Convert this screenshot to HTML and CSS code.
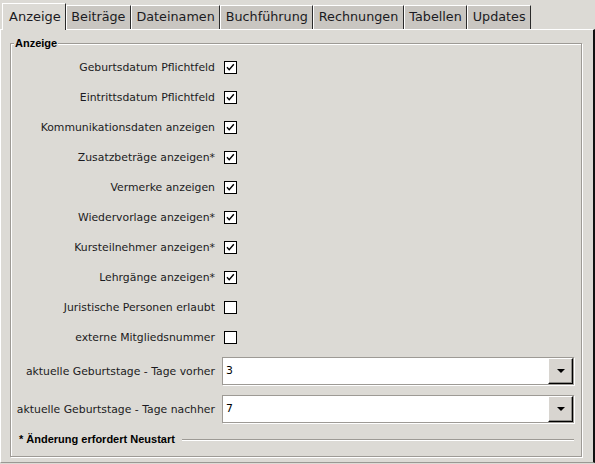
FILE: index.html
```html
<!DOCTYPE html>
<html lang="de">
<head>
<meta charset="utf-8">
<title>Einstellungen</title>
<link rel="stylesheet" href="styles.css">
</head>
<body>
<div class="tabs">
  <div class="tab active">Anzeige</div>
  <div class="tab">Beiträge</div>
  <div class="tab">Dateinamen</div>
  <div class="tab">Buchführung</div>
  <div class="tab">Rechnungen</div>
  <div class="tab">Tabellen</div>
  <div class="tab">Updates</div>
</div>
<div class="panel">
  <fieldset class="group">
    <legend class="group-title">Anzeige</legend>
    <div class="rows">
      <div class="row check"><span class="label">Geburtsdatum Pflichtfeld</span><svg class="cb" viewBox="0 0 13 13"><rect x="0.5" y="0.5" width="12" height="12"/><path d="M3 6.2 L5.2 8.6 L9.8 3.2"/></svg></div>
      <div class="row check"><span class="label">Eintrittsdatum Pflichtfeld</span><svg class="cb" viewBox="0 0 13 13"><rect x="0.5" y="0.5" width="12" height="12"/><path d="M3 6.2 L5.2 8.6 L9.8 3.2"/></svg></div>
      <div class="row check"><span class="label">Kommunikationsdaten anzeigen</span><svg class="cb" viewBox="0 0 13 13"><rect x="0.5" y="0.5" width="12" height="12"/><path d="M3 6.2 L5.2 8.6 L9.8 3.2"/></svg></div>
      <div class="row check"><span class="label">Zusatzbeträge anzeigen*</span><svg class="cb" viewBox="0 0 13 13"><rect x="0.5" y="0.5" width="12" height="12"/><path d="M3 6.2 L5.2 8.6 L9.8 3.2"/></svg></div>
      <div class="row check"><span class="label">Vermerke anzeigen</span><svg class="cb" viewBox="0 0 13 13"><rect x="0.5" y="0.5" width="12" height="12"/><path d="M3 6.2 L5.2 8.6 L9.8 3.2"/></svg></div>
      <div class="row check"><span class="label">Wiedervorlage anzeigen*</span><svg class="cb" viewBox="0 0 13 13"><rect x="0.5" y="0.5" width="12" height="12"/><path d="M3 6.2 L5.2 8.6 L9.8 3.2"/></svg></div>
      <div class="row check"><span class="label">Kursteilnehmer anzeigen*</span><svg class="cb" viewBox="0 0 13 13"><rect x="0.5" y="0.5" width="12" height="12"/><path d="M3 6.2 L5.2 8.6 L9.8 3.2"/></svg></div>
      <div class="row check"><span class="label">Lehrgänge anzeigen*</span><svg class="cb" viewBox="0 0 13 13"><rect x="0.5" y="0.5" width="12" height="12"/><path d="M3 6.2 L5.2 8.6 L9.8 3.2"/></svg></div>
      <div class="row check"><span class="label">Juristische Personen erlaubt</span><svg class="cb" viewBox="0 0 13 13"><rect x="0.5" y="0.5" width="12" height="12"/></svg></div>
      <div class="row check"><span class="label">externe Mitgliedsnummer</span><svg class="cb" viewBox="0 0 13 13"><rect x="0.5" y="0.5" width="12" height="12"/></svg></div>
      <div class="row combo-row first"><span class="label">aktuelle Geburtstage - Tage vorher</span><div class="combo"><span class="combo-value">3</span><span class="combo-btn"><span class="arrow"></span></span></div></div>
      <div class="row combo-row"><span class="label">aktuelle Geburtstage - Tage nachher</span><div class="combo"><span class="combo-value">7</span><span class="combo-btn"><span class="arrow"></span></span></div></div>
      <div class="footer"><span class="footer-text">* Änderung erfordert Neustart</span><span class="sep"></span></div>
    </div>
  </fieldset>
</div>
</body>
</html>
```
FILE: styles.css
```css
html, body {
  margin: 0;
  padding: 0;
}
body {
  width: 595px;
  height: 464px;
  overflow: hidden;
  background: #dcdad5;
  font-family: "DejaVu Sans", sans-serif;
  color: #1b1b22;
}

/* tabs */
.tabs {
  display: flex;
  align-items: flex-end;
  height: 29px;
  padding-left: 2px;
  box-sizing: border-box;
}
.tab {
  font-size: 12.75px;
  line-height: 21px;
  padding: 0 4.5px 2px 4.5px;
  background: #c9c6c1;
  border-top: 1px solid #fff;
  border-left: 1px solid #fff;
  border-right: 1px solid #2a2a2a;
  white-space: nowrap;
}
.tab.active {
  position: relative;
  z-index: 1;
  background: #dcdad5;
  font-size: 13px;
  line-height: 25px;
  padding: 0 4px 1px 6px;
  margin-bottom: -1px;
}

/* panel */
.panel {
  box-sizing: border-box;
  height: 434px;
  border-top: 1px solid #fff;
  border-left: 1px solid #fff;
  border-right: 2px solid #111;
  border-bottom: 1px solid #9a9893;
}

.group {
  box-sizing: border-box;
  width: 572px;
  margin: 7px 0 0 9px;
  padding: 2px 7px 10px 0;
  border: 1px solid #9d9a95;
  box-shadow: inset 1px 1px 0 #fff, 1px 1px 0 #fff;
  min-inline-size: 0;
}
.group-title {
  font-family: "Liberation Sans", Arial, sans-serif;
  font-weight: bold;
  font-size: 11px;
  line-height: 13px;
  padding: 0 1px;
  margin-left: 3px;
  background: #dcdad5;
  color: #000;
}

.rows {
  display: flex;
  flex-direction: column;
}
.row {
  display: grid;
  grid-template-columns: 204px 352px;
  column-gap: 7px;
  align-items: center;
}
.row.check {
  height: 30px;
}
.row.combo-row {
  height: 28px;
  margin-top: 10px;
}
.row.combo-row.first {
  margin-top: 5px;
}
.label {
  text-align: right;
  font-size: 10.85px;
  white-space: nowrap;
}
.cb {
  width: 13px;
  height: 13px;
  margin-left: 2px;
  display: block;
}
.cb rect {
  fill: #fff;
  stroke: #000;
  stroke-width: 1;
}
.cb path {
  fill: none;
  stroke: #000;
  stroke-width: 1.4;
}

.combo {
  box-sizing: border-box;
  height: 28px;
  display: flex;
  align-items: stretch;
  background: #fff;
  border: 1px solid #9d9a95;
  box-shadow: 1px 1px 0 #fff;
}
.combo-value {
  flex: 1;
  font-size: 10.85px;
  line-height: 26px;
  padding-left: 3px;
  color: #000;
}
.combo-btn {
  box-sizing: border-box;
  width: 25px;
  background: #d8d5d0;
  border-top: 1px solid #fff;
  border-left: 1px solid #fff;
  border-right: 1px solid #000;
  border-bottom: 1px solid #000;
  box-shadow: inset -1px -1px 0 #8e8c88;
  display: flex;
  align-items: center;
  justify-content: center;
}
.arrow {
  width: 0;
  height: 0;
  border-left: 4px solid transparent;
  border-right: 4px solid transparent;
  border-top: 4px solid #000;
}

.footer {
  display: flex;
  align-items: center;
  height: 13px;
  margin-top: 10px;
  padding-left: 8px;
  width: 563px;
  box-sizing: border-box;
}
.footer-text {
  font-family: "Liberation Sans", Arial, sans-serif;
  font-weight: bold;
  font-size: 11px;
  line-height: 13px;
  color: #000;
  white-space: nowrap;
}
.sep {
  flex: 1;
  margin-left: 7px;
  border-top: 1px solid #9d9a95;
  border-bottom: 1px solid #fff;
}
```
